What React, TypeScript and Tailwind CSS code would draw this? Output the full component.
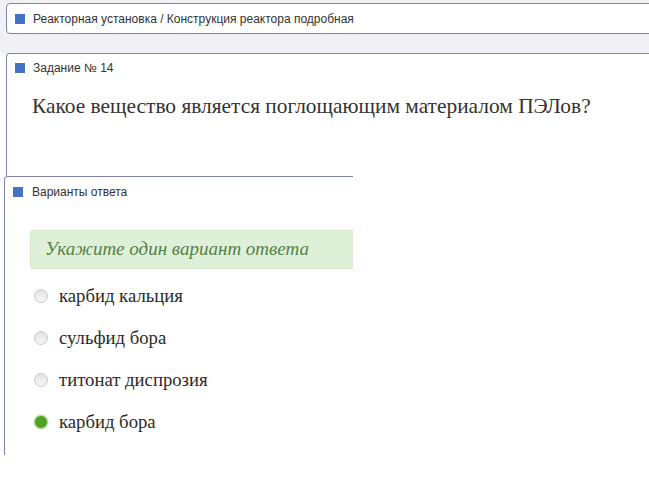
import React from "react";

const options = [
  { label: "карбид кальция", checked: false },
  { label: "сульфид бора", checked: false },
  { label: "титонат диспрозия", checked: false },
  { label: "карбид бора", checked: true },
];

const Marker = () => <span className="block w-[10px] h-[10px] bg-[#4472c4] shrink-0" />;

const Radio = ({ checked }: { checked: boolean }) =>
  checked ? (
    <span className="block w-[14px] h-[14px] rounded-full bg-[#4ea51f] border border-[#b9dca6] shadow-[0_0_0_1px_#e3f1da] shrink-0" />
  ) : (
    <span className="block w-[14px] h-[14px] rounded-full bg-gradient-to-b from-[#e2e2e2] to-[#f7f7f7] border border-[#cbcbcb] shrink-0" />
  );

export default function App() {
  return (
    <div className="w-[649px] h-[489px] overflow-hidden bg-white font-['Liberation_Sans',Arial,sans-serif] text-[#333]">
      {/* breadcrumb bar */}
      <div className="bg-[#f1f1f5] pt-[3px] pb-[19px] pl-[6px]">
        <div className="w-[700px] h-[31px] flex items-center gap-[8px] pl-[8px] bg-white border border-[#7f84ad] rounded-l-[4px]">
          <Marker />
          <span className="text-[12px] leading-none">Реакторная установка / Конструкция реактора подробная</span>
        </div>
      </div>

      {/* task */}
      <div className="ml-[6px] h-[123px] border-t border-l border-[#7f84ad] rounded-tl-[4px] pl-[8px] pt-[9px]">
        <div className="flex items-center gap-[8px] h-[10px]">
          <Marker />
          <span className="text-[12px] leading-none">Задание № 14</span>
        </div>
        <p className="mt-[20px] pl-[17px] font-['Liberation_Serif','Times_New_Roman',serif] text-[21.4px] leading-[26px] text-[#333]">
          Какое вещество является поглощающим материалом ПЭЛов?
        </p>
      </div>

      {/* answers */}
      <div className="ml-[4px] w-[349px] h-[279px] border-t border-l border-[#7f84ad] rounded-tl-[4px] pl-[8px] pt-[10px]">
        <div className="flex items-center gap-[9px] h-[10px]">
          <Marker />
          <span className="text-[12px] leading-none">Варианты ответа</span>
        </div>
        <div className="mt-[33px] ml-[17px] h-[39px] flex items-center pl-[14px] bg-[#dff0d8] border border-[#d2e8c6] rounded-l-[4px] border-r-0">
          <span className="font-['Liberation_Serif','Times_New_Roman',serif] italic text-[19px] text-[#55804a]">
            Укажите один вариант ответа
          </span>
        </div>
        <div className="mt-[6px] ml-[21px] flex flex-col">
          {options.map((o) => (
            <label key={o.label} className="h-[42px] flex items-center gap-[11px]">
              <Radio checked={o.checked} />
              <span className="font-['Liberation_Serif','Times_New_Roman',serif] text-[18.7px] text-[#2a2a2a]">{o.label}</span>
            </label>
          ))}
        </div>
      </div>
    </div>
  );
}
